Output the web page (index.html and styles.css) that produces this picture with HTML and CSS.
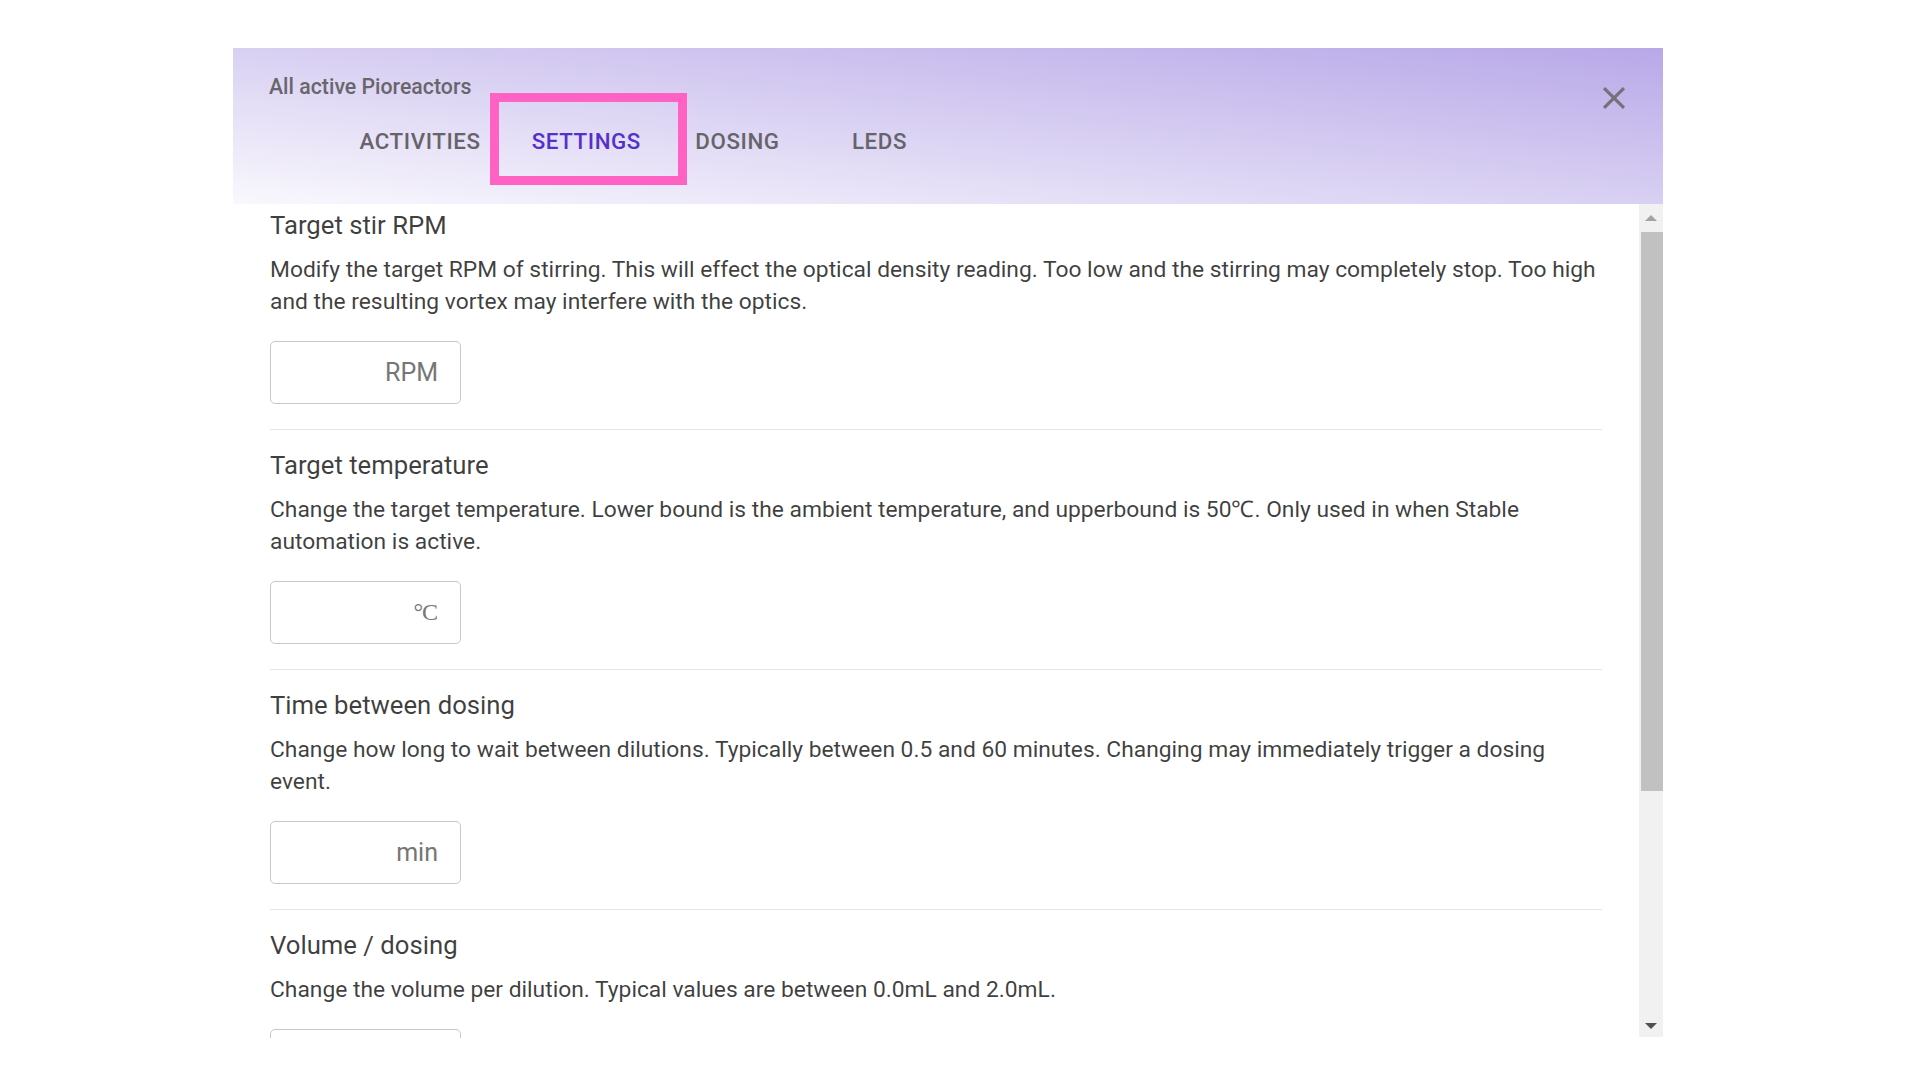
FILE: index.html
```html
<!DOCTYPE html>
<html lang="en">
<head>
<meta charset="utf-8">
<title>All active Pioreactors - Settings</title>
<link rel="stylesheet" href="styles.css">
</head>
<body>
<div class="page">
  <div class="dialog">
    <header class="dlg-header">
      <div class="dlg-title">All active Pioreactors</div>
      <nav class="tabs">
        <div class="tab">Activities</div>
        <div class="tab active">Settings</div>
        <div class="tab">Dosing</div>
        <div class="tab">LEDs</div>
      </nav>
      <button class="close" aria-label="close">
        <svg viewBox="0 0 24 24" width="38" height="38"><path d="M19 6.41 17.59 5 12 10.59 6.41 5 5 6.41 10.59 12 5 17.59 6.41 19 12 13.41 17.59 19 19 17.59 13.41 12z"/></svg>
      </button>
      <div class="highlight"></div>
    </header>
    <div class="dlg-body">
      <div class="content">
        <section class="setting">
          <h3 class="setting-title">Target stir RPM</h3>
          <p class="setting-desc">Modify the target RPM of stirring. This will effect the optical density reading. Too low and the stirring may completely stop. Too high and the resulting vortex may interfere with the optics.</p>
          <div class="field"><span class="unit">RPM</span></div>
        </section>
        <section class="setting">
          <h3 class="setting-title">Target temperature</h3>
          <p class="setting-desc">Change the target temperature. Lower bound is the ambient temperature, and upperbound is 50℃. Only used in when Stable automation is active.</p>
          <div class="field"><span class="unit serif">°C</span></div>
        </section>
        <section class="setting">
          <h3 class="setting-title">Time between dosing</h3>
          <p class="setting-desc">Change how long to wait between dilutions. Typically between 0.5 and 60 minutes. Changing may immediately trigger a dosing event.</p>
          <div class="field"><span class="unit">min</span></div>
        </section>
        <section class="setting">
          <h3 class="setting-title">Volume / dosing</h3>
          <p class="setting-desc">Change the volume per dilution. Typical values are between 0.0mL and 2.0mL.</p>
          <div class="field"></div>
        </section>
      </div>
      <div class="scrollbar">
        <div class="sb-btn"><span class="tri up"></span></div>
        <div class="sb-thumb"></div>
        <div class="sb-fill"></div>
        <div class="sb-btn bottom"><span class="tri down"></span></div>
      </div>
    </div>
  </div>
</div>
</body>
</html>
```
FILE: styles.css
```css
html, body {
  margin: 0;
  padding: 0;
  background: #ffffff;
}
body {
  font-family: Roboto, "Liberation Sans", Arial, sans-serif;
  color: rgba(0, 0, 0, 0.76);
}
.page {
  padding: 48px 0 0 233px;
}
.dialog {
  width: 1430px;
  height: 990px;
  display: flex;
  flex-direction: column;
  background: #ffffff;
  overflow: hidden;
}
.dlg-header {
  position: relative;
  height: 156px;
  box-sizing: border-box;
  padding: 25px 36px 0 36px;
  background: linear-gradient(to top right, #f9f8fd 0%, #b8a8e8 100%);
  flex: none;
}
.dlg-title {
  font-size: 21.3px;
  line-height: 28px;
  font-weight: 500;
  color: #68666c;
}
.tabs {
  display: flex;
  margin-top: 8px;
  margin-left: 65px;
  height: 64px;
}
.tab {
  min-width: 142px;
  padding: 0 25.5px;
  box-sizing: border-box;
  display: flex;
  align-items: center;
  justify-content: center;
  font-size: 22.3px;
  font-weight: 500;
  letter-spacing: 0.6px;
  text-transform: uppercase;
  color: #66646a;
}
.tab.active {
  color: #5331ca;
}
.close {
  position: absolute;
  right: 30px;
  top: 31px;
  width: 38px;
  height: 38px;
  padding: 0;
  border: 0;
  background: transparent;
  display: flex;
}
.close svg {
  fill: #737278;
}
.highlight {
  position: absolute;
  left: 257px;
  top: 45px;
  width: 197px;
  height: 92px;
  box-sizing: border-box;
  border: 9px solid #ff62c3;
}
.dlg-body {
  flex: 1;
  display: flex;
  min-height: 0;
}
.content {
  flex: 1;
  padding: 5px 37px 0 37px;
  overflow: hidden;
}
.setting {
  padding: 19px 0 25px 0;
  border-bottom: 1px solid #e4e4e4;
}
.setting:first-child {
  padding-top: 0;
}
.setting-title {
  margin: 0;
  font-size: 25.7px;
  line-height: 32px;
  font-weight: 400;
  color: rgba(0, 0, 0, 0.76);
}
.setting-desc {
  margin: 13px 0 0 0;
  font-size: 22.8px;
  line-height: 32px;
  color: rgba(0, 0, 0, 0.76);
}
.field {
  margin-top: 23px;
  width: 191px;
  height: 63px;
  box-sizing: border-box;
  border: 1px solid #c8c8c8;
  border-radius: 5px;
  display: flex;
  align-items: center;
  justify-content: flex-end;
  padding-right: 22px;
}
.unit {
  font-size: 25px;
  color: #767676;
}
.unit.serif {
  font-family: "Liberation Serif", "DejaVu Serif", serif;
  font-size: 24px;
  letter-spacing: -1px;
  padding-right: 1px;
}
.scrollbar {
  width: 24px;
  flex: none;
  display: flex;
  flex-direction: column;
  background: #f1f1f1;
  margin-bottom: 1px;
}
.sb-btn {
  height: 28px;
  display: flex;
  align-items: center;
  justify-content: center;
  flex: none;
}
.sb-btn.bottom {
  height: 22px;
}
.tri {
  width: 0;
  height: 0;
  border-left: 6px solid transparent;
  border-right: 6px solid transparent;
}
.tri.up {
  border-bottom: 6px solid #a3a3a3;
}
.tri.down {
  border-top: 6px solid #505050;
}
.sb-thumb {
  height: 559px;
  margin-left: 2px;
  background: #c1c1c1;
  flex: none;
}
.sb-fill {
  flex: 1;
}
```
